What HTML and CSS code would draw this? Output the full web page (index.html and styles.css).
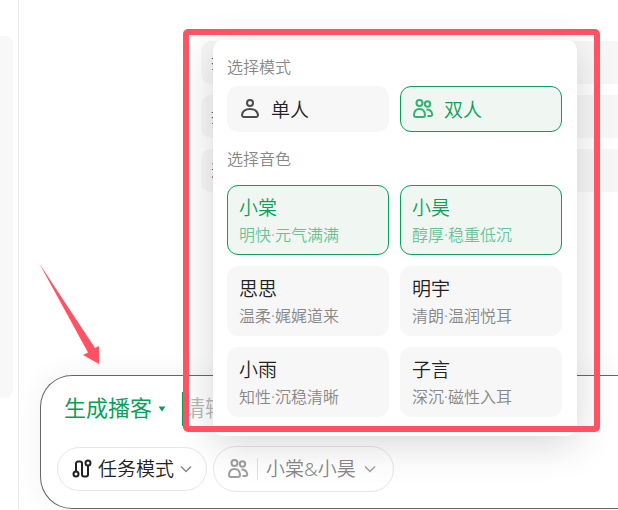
FILE: index.html
```
<!DOCTYPE html>
<html lang="zh-CN">
<head>
    <meta charset="UTF-8">
    <meta name="viewport" content="width=device-width, initial-scale=1.0">
    <title>生成播客</title>
    <link rel="stylesheet" href="styles.css">
</head>
<body>
    <aside><div class="side-card"></div></aside>
    <main>
        <ul class="suggestions">
            <li>推</li>
            <li>推</li>
            <li>选</li>
        </ul>

        <form class="composer">
            <div class="prompt">
                <button type="button" class="skill">生成播客
                    <svg width="8" height="6" viewBox="0 0 8 6"><path d="M0.5 0.5h7L4 5.5z" fill="currentColor"/></svg>
                </button>
                <input type="text" placeholder="请输入主题" aria-label="主题">
            </div>

            <div class="tools">
                <button type="button" class="pill pill-task">
                    <svg width="20" height="20" viewBox="0 0 20 20" fill="none" stroke="currentColor" stroke-width="2">
                        <circle cx="4" cy="15" r="2.5"/>
                        <circle cx="16" cy="4" r="2.5"/>
                        <path d="M4 12.5V4.5a2 2 0 0 1 2-2h2a2 2 0 0 1 2 2v11a2 2 0 0 0 2 2h2a2 2 0 0 0 2-2v-9"/>
                    </svg>
                    任务模式
                    <svg class="chevron" width="12" height="8" viewBox="0 0 12 8" fill="none" stroke="currentColor" stroke-width="1.5"><path d="M1 1.5l5 5 5-5"/></svg>
                </button>

                <div class="voice">
                    <button type="button" class="pill pill-voice">
                        <svg width="22" height="20" viewBox="0 0 22 20" fill="none" stroke="currentColor" stroke-width="2"><use href="#two"/></svg>
                        <span class="divider"></span>
                        小棠&amp;小昊
                        <svg class="chevron" width="12" height="8" viewBox="0 0 12 8" fill="none" stroke="currentColor" stroke-width="1.5"><path d="M1 1.5l5 5 5-5"/></svg>
                    </button>

                    <div class="popover">
                        <h3>选择模式</h3>
                        <div class="grid">
                            <button type="button" class="mode">
                                <svg width="22" height="20" viewBox="0 0 22 20" fill="none" stroke="currentColor" stroke-width="2">
                                    <circle cx="11" cy="4" r="3"/>
                                    <path d="M5 18h12a2 2 0 0 0 2-2.2C18.4 12.4 15.5 10 11 10s-7.400 2.400-8 5.800A2 2 0 0 0 5 18z"/>
                                </svg>
                                单人
                            </button>
                            <button type="button" class="mode active">
                                <svg width="22" height="20" viewBox="0 0 22 20" fill="none" stroke="currentColor" stroke-width="2">
                                    <g id="two">
                                        <circle cx="7.5" cy="4" r="3"/>
                                        <circle cx="15.5" cy="5" r="2.7"/>
                                        <path d="M4 18h7a2 2 0 0 0 2-2C12.8 12.3 10.7 10 7.5 10S2.2 12.3 2 16a2 2 0 0 0 2 2z"/>
                                        <path d="M14.5 10.5c3.5 0 5.2 1.8 5.7 4.5a1.600 1.600 0 0 1-1.600 2h-3.100"/>
                                    </g>
                                </svg>
                                双人
                            </button>
                        </div>

                        <h3 class="voice-title">选择音色</h3>
                        <div class="grid">
                            <button type="button" class="card active"><b>小棠</b><span>明快·元气满满</span></button>
                            <button type="button" class="card active"><b>小昊</b><span>醇厚·稳重低沉</span></button>
                            <button type="button" class="card"><b>思思</b><span>温柔·娓娓道来</span></button>
                            <button type="button" class="card"><b>明宇</b><span>清朗·温润悦耳</span></button>
                            <button type="button" class="card"><b>小雨</b><span>知性·沉稳清晰</span></button>
                            <button type="button" class="card"><b>子言</b><span>深沉·磁性入耳</span></button>
                        </div>
                        <div class="highlight"></div>
                    </div>
                </div>
            </div>

            <svg class="pointer" width="60" height="102" viewBox="0 0 60 102"><path d="M0 0L56 85l4-2v18L44 92l5-2.5z" fill="#ff5364"/></svg>
        </form>
    </main>
</body>
</html>
```
FILE: styles.css
```
*{
    margin: 0px;
    padding: 0px;
    box-sizing: border-box;
}
body{
    display: flex;
    height: 100vh;
    overflow: hidden;
    background-color: white;
    color: #222;
    font-family: "Noto Sans", "Noto Sans CJK SC", sans-serif;
    font-weight: 350;
}
button, input{
    font: inherit;
    color: inherit;
    background: none;
    border: none;
    outline: none;
}
button{
    cursor: pointer;
}
aside{
    flex: 0 0 19px;
    padding: 36px 5px 112px 0px;
    border-right: 1px solid #e8e8e8;
}
.side-card{
    height: 100%;
    background-color: #f8f8f8;
    border-radius: 0px 8px 8px 0px;
}
main{
    flex: 1 1 0;
    min-width: 0;
    display: flex;
    flex-direction: column;
    justify-content: space-between;
    padding: 41px 0px 1px 21px;
}
.suggestions{
    display: flex;
    flex-direction: column;
    gap: 11px;
    margin-left: 161px;
    list-style: none;
}
.suggestions li{
    padding: 0px 10px;
    border-radius: 10px 0px 0px 10px;
    background-color: #f7f7f7;
    color: #666;
    font-size: 16px;
    line-height: 43px;
}

/* Caixa de entrada */
.composer{
    position: relative;
    padding: 16px 0px 16px 16px;
    border: 1px solid #666;
    border-right: none;
    border-radius: 32px 0px 0px 32px;
    background-color: white;
    box-shadow: 0 0 30px rgba(0, 0, 0, 0.06);
}
.prompt{
    display: flex;
    align-items: center;
    gap: 16px;
    height: 34px;
    padding-left: 7px;
    font-size: 22px;
}
.skill{
    display: flex;
    align-items: center;
    gap: 6px;
    color: #0a9f58;
    font-weight: 400;
    line-height: 28px;
    padding-bottom: 4px;
    white-space: nowrap;
}
.skill svg{
    margin-top: 3px;
}
.prompt input{
    flex: 1 1 0;
    min-width: 0;
    height: 34px;
    border-left: 1px solid #0a9f58;
    padding-bottom: 4px;
}
.prompt input::placeholder{
    color: #b8b8b8;
}
.tools{
    display: flex;
    align-items: center;
    gap: 6px;
    margin-top: 20px;
}
.pill{
    display: flex;
    align-items: center;
    height: 46px;
    padding: 0px 14px;
    border: 1px solid #e6e6e6;
    border-radius: 23px;
    font-size: 19px;
    line-height: 26px;
    white-space: nowrap;
}
.pill-task{
    height: 44px;
    gap: 6px;
}
.pill-voice{
    gap: 8px;
    padding: 0px 17px 0px 13px;
    color: #888;
}
.chevron{
    color: #888;
}
.divider{
    width: 1px;
    height: 22px;
    background-color: #e2e2e2;
}
.voice{
    position: relative;
}

/* Menu de vozes */
.popover{
    position: absolute;
    left: 0px;
    bottom: calc(100% + 10px);
    width: 364px;
    padding: 15px 15px 19px 14px;
    border-radius: 10px;
    background-color: white;
    box-shadow: 0 8px 40px rgba(0, 0, 0, 0.16);
}
h3{
    margin-bottom: 7px;
    color: #888;
    font-size: 16px;
    font-weight: 350;
    line-height: 24px;
}
.voice-title{
    margin: 15px 0px 14px;
}
.grid{
    display: grid;
    grid-template-columns: 1fr 1fr;
    gap: 11px;
}
.mode, .card{
    border: 1px solid #f7f7f7;
    border-radius: 11px;
    background-color: #f7f7f7;
    text-align: left;
}
.mode{
    display: flex;
    align-items: center;
    gap: 10px;
    height: 46px;
    padding: 0px 11px;
    font-size: 19px;
}
.card{
    padding: 8px 11px 6px;
}
.card b{
    display: block;
    font-size: 19px;
    font-weight: 350;
    line-height: 28px;
}
.card span{
    display: block;
    color: #888;
    font-size: 16px;
    line-height: 26px;
}
.mode.active, .card.active{
    border-color: #0a9f58;
    background-color: #f0f7f3;
    color: #0a9f58;
}
.card.active span{
    color: #68c498;
}
.mode svg, .pill-voice svg{
    opacity: 0.8;
}

/* Destaques por cima da tela */
.highlight{
    position: absolute;
    top: -11px;
    right: -23px;
    bottom: 4px;
    left: -30px;
    border: 6px solid #ff5364;
    border-radius: 5px;
    pointer-events: none;
}
.pointer{
    position: absolute;
    left: -2px;
    bottom: 143px;
}
```
